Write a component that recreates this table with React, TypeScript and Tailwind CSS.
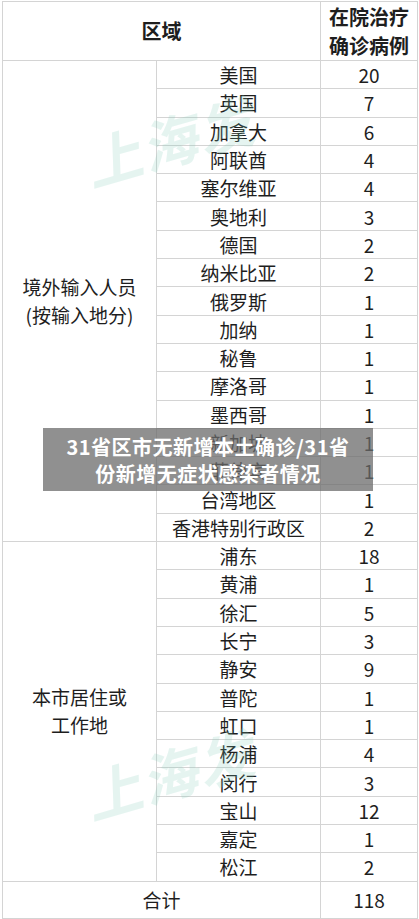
import React from "react";

const abroad: [string, number][] = [
  ["美国", 20],
  ["英国", 7],
  ["加拿大", 6],
  ["阿联酋", 4],
  ["塞尔维亚", 4],
  ["奥地利", 3],
  ["德国", 2],
  ["纳米比亚", 2],
  ["俄罗斯", 1],
  ["加纳", 1],
  ["秘鲁", 1],
  ["摩洛哥", 1],
  ["墨西哥", 1],
  ["新加坡", 1],
  ["菲律宾", 1],
  ["台湾地区", 1],
  ["香港特别行政区", 2],
];

const local: [string, number][] = [
  ["浦东", 18],
  ["黄浦", 1],
  ["徐汇", 5],
  ["长宁", 3],
  ["静安", 9],
  ["普陀", 1],
  ["虹口", 1],
  ["杨浦", 4],
  ["闵行", 3],
  ["宝山", 12],
  ["嘉定", 1],
  ["松江", 2],
];

const cell = "border border-[#d4d4d4] text-center align-middle";

const Group = ({ label, rows }: { label: React.ReactNode; rows: [string, number][] }) => (
  <>
    {rows.map(([name, n], i) => (
      <tr key={name} className="h-[28.3px]">
        {i === 0 && (
          <td rowSpan={rows.length} className={`${cell} leading-[28px]`}>
            {label}
          </td>
        )}
        <td className={cell}>{name}</td>
        <td className={cell}>{n}</td>
      </tr>
    ))}
  </>
);

export default function App() {
  return (
    <div
      className="relative w-[419px] h-[919px] bg-white overflow-hidden text-[#1e1e1e]"
      style={{ fontFamily: '"Noto Sans CJK SC", "Noto Sans", sans-serif' }}
    >
      <div className="pl-[2px] pr-px pt-px">
        <table className="w-full border-collapse table-fixed text-[19px] leading-none">
          <colgroup>
            <col className="w-[154px]" />
            <col className="w-[164px]" />
            <col />
          </colgroup>
          <tbody>
            <tr className="h-[58px]">
              <td colSpan={2} className={`${cell} font-semibold text-[20px]`}>
                区域
              </td>
              <td className={`${cell} font-semibold text-[20px] leading-[29px]`}>
                在院治疗
                <br />
                确诊病例
              </td>
            </tr>
            <Group
              label={
                <>
                  境外输入人员
                  <br />
                  (按输入地分)
                </>
              }
              rows={abroad}
            />
            <Group
              label={
                <>
                  本市居住或
                  <br />
                  工作地
                </>
              }
              rows={local}
            />
            <tr className="h-[37px]">
              <td colSpan={2} className={cell}>
                合计
              </td>
              <td className={cell}>118</td>
            </tr>
          </tbody>
        </table>
      </div>

      {/* watermarks */}
      <div className="absolute left-[82px] top-[112px] -rotate-[16deg] whitespace-nowrap text-[56px] leading-none font-bold italic text-[#7fcdb8] opacity-20 pointer-events-none tracking-[2px]">
        上海发
      </div>
      <div className="absolute left-[82px] top-[745px] -rotate-[16deg] whitespace-nowrap text-[56px] leading-none font-bold italic text-[#7fcdb8] opacity-20 pointer-events-none tracking-[2px]">
        上海发
      </div>

      {/* caption overlay */}
      <div className="absolute left-[43px] top-[428px] w-[330px] h-[63px] bg-[#6b6b6b]/75 flex flex-col items-center justify-center text-white font-bold text-[20px] leading-[27px] tracking-[0.5px]">
        <div>31省区市无新增本土确诊/31省</div>
        <div>份新增无症状感染者情况</div>
      </div>
    </div>
  );
}
